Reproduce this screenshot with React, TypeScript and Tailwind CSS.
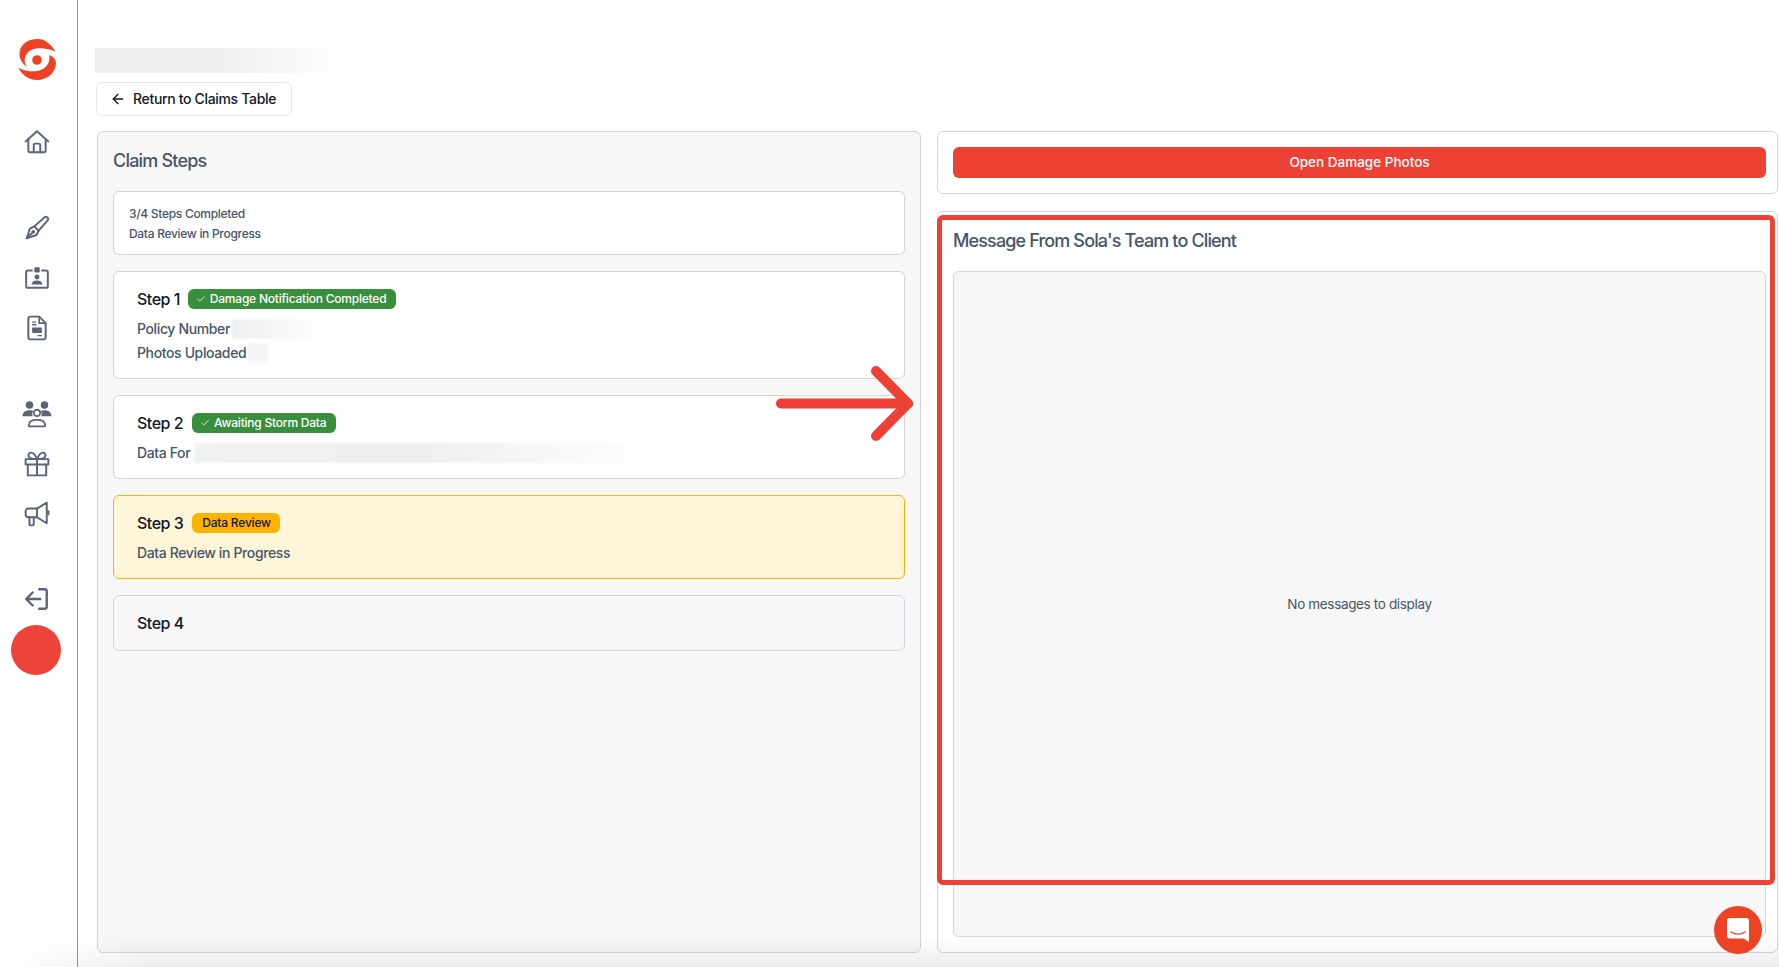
import { ArrowLeft, Check } from 'lucide-react';

function Logo() {
  return (
    <svg width="38" height="41" viewBox="0 0 38 41" fill="#ec4325">
      <circle cx="19" cy="21" r="4.800" />
      <path d="M37.700 12.700C31 3 26 0 20 0 9 0 1.500 6 1.500 15c0 5 3 10 7.200 12.700C6.500 24 6 20.500 7.500 17c2-4.500 5.500-7 10.500-7.500 7-.7 14 .5 19.700 3.200z" />
      <path d="M.3 28.700C4 36 11 41 19 41c11 0 19-8 19-17 0-3-2-6-6.700-8 .7 6-1.300 11-6.300 14-7 4-17 2.500-24.700-1.300z" />
    </svg>
  );
}

function HomeIcon() {
  return (
    <svg width="26" height="26" viewBox="0 0 24 24" fill="none" stroke="#5b6577" strokeWidth="1.8" strokeLinecap="round" strokeLinejoin="round">
      <path d="M1.500 11.500 12 2l10.500 9.500" />
      <path d="M4 9.500V19.500a2 2 0 0 0 2 2h12a2 2 0 0 0 2-2V9.500" />
      <path d="M9 21.500V14.500a1 1 0 0 1 1-1h4a1 1 0 0 1 1 1v7" />
    </svg>
  );
}

function BrushIcon() {
  return (
    <svg width="26" height="26" viewBox="0 0 24 24" fill="none" stroke="#5b6577" strokeWidth="1.8" strokeLinecap="round" strokeLinejoin="round">
      <path d="M9.500 10.500 18.800 2.300a2 2 0 0 1 2.800 2.900L13.500 14.500" />
      <path d="M9.500 10.500 5.500 12.500 2.500 21.500l9-3 2-4z" />
      <path d="m2.500 21.500 5-5" />
      <circle cx="8.500" cy="15.500" r="0.800" fill="#5b6577" />
    </svg>
  );
}

function BadgeIcon() {
  return (
    <svg width="26" height="26" viewBox="0 0 24 24" fill="none">
      <path d="M8 5H3.500a1.500 1.500 0 0 0-1.500 1.500v13A1.500 1.500 0 0 0 3.500 21h17a1.500 1.500 0 0 0 1.500-1.500v-13A1.500 1.500 0 0 0 20.500 5H16" stroke="#5b6577" strokeWidth="1.8" />
      <rect x="9.500" y="2" width="5" height="5" rx="1" fill="#5b6577" />
      <circle cx="12" cy="11" r="2.300" fill="#5b6577" />
      <path d="M7 18c0-2.500 2-3.800 5-3.800s5 1.300 5 3.800z" fill="#5b6577" />
    </svg>
  );
}

function FileIcon() {
  return (
    <svg width="26" height="26" viewBox="0 0 24 24" fill="none">
      <path d="M6 1.500h8l6 6v13a2 2 0 0 1-2 2H6a2 2 0 0 1-2-2v-17a2 2 0 0 1 2-2z" stroke="#5b6577" strokeWidth="1.800" strokeLinejoin="round" />
      <path d="M14 2v5.500h5.500" stroke="#5b6577" strokeWidth="1.500" />
      <rect x="7.500" y="11.500" width="9" height="5" rx="0.500" fill="#5b6577" />
      <path d="M7.500 6.500h3.500M7.500 9h4M12.500 19h4" stroke="#5b6577" strokeWidth="1.200" />
    </svg>
  );
}

function UsersIcon() {
  return (
    <svg width="30" height="28" viewBox="0 0 28 26" fill="none">
      <circle cx="7" cy="4.500" r="3.500" fill="#5b6577" />
      <circle cx="21" cy="4.500" r="3.500" fill="#5b6577" />
      <path d="M0.500 15c0-3.500 2.500-5.500 6.500-5.500 1.500 0 2.600.3 3.500.8-1 1.300-1.200 3-.5 4.700z" fill="#5b6577" />
      <path d="M27.500 15c0-3.500-2.500-5.500-6.500-5.500-1.500 0-2.600.3-3.500.8 1 1.300 1.200 3 .5 4.700z" fill="#5b6577" />
      <circle cx="14" cy="12" r="3" stroke="#5b6577" strokeWidth="1.700" />
      <path d="M6.500 24.500v-1.500c0-3 3-4.500 7.500-4.500s7.500 1.500 7.500 4.500v1.500z" stroke="#5b6577" strokeWidth="1.700" strokeLinejoin="round" />
    </svg>
  );
}

function GiftIcon() {
  return (
    <svg width="26" height="26" viewBox="0 0 24 24" fill="none" stroke="#5b6577" strokeWidth="1.800" strokeLinejoin="round">
      <rect x="1.500" y="7.500" width="21" height="5" />
      <path d="M3.500 12.500v10h17v-10M12 7.500v15" />
      <path d="M12 7.500C10 3 8.500 1.500 6.800 1.500 4.800 1.500 4 3 4.200 4.500 4.500 6.500 6.500 7.500 12 7.500zM12 7.500c2-4.500 3.500-6 5.200-6 2 0 2.800 1.500 2.600 3-.3 2-2.300 3-7.800 3z" />
    </svg>
  );
}

function MegaphoneIcon() {
  return (
    <svg width="26" height="26" viewBox="0 0 24 24" fill="none" stroke="#5b6577" strokeWidth="1.800" strokeLinecap="round" strokeLinejoin="round">
      <path d="M21 1.500 12 7H4a2.500 2.500 0 0 0-2.500 2.500v3A2.500 2.500 0 0 0 4 15h8l9 5.500z" />
      <path d="M12 7v8" />
      <path d="M22.500 9.500v3" />
      <path d="M5 15v6a1.500 1.500 0 0 0 1.500 1.500h1A1.500 1.500 0 0 0 9 21v-6" />
    </svg>
  );
}

function LogoutIcon() {
  return (
    <svg width="26" height="26" viewBox="0 0 24 24" fill="none" stroke="#5b6577" strokeWidth="2.200" strokeLinecap="round" strokeLinejoin="round">
      <path d="M14 3h5a2 2 0 0 1 2 2v14a2 2 0 0 1-2 2h-5" />
      <path d="M15 12H2M8 6l-6 6 6 6" />
    </svg>
  );
}

function Blur({ className }: { className: string }) {
  return <span className={`inline-block h-5 blur-[1px] ${className}`} />;
}

function Badge({ label }: { label: string }) {
  return (
    <span className="flex h-5 items-center gap-1 rounded-md bg-[#388e3c] pl-2 pr-[10px] text-xs font-medium tracking-[-0.22px] text-white">
      <Check size={10} strokeWidth={2} />
      {label}
    </span>
  );
}

export default function App() {
  return (
    <div className="relative flex h-[967px] overflow-hidden bg-white font-['Inter',sans-serif] text-sm text-[#475569]">
      <aside className="flex w-[78px] shrink-0 flex-col items-center border-r border-[#8e97a5] pr-[3px] pt-[39px]">
        <Logo />
        <div className="mt-[49px]"><HomeIcon /></div>
        <div className="mt-[60px]"><BrushIcon /></div>
        <div className="mt-6"><BadgeIcon /></div>
        <div className="mt-6"><FileIcon /></div>
        <div className="mt-[59px]"><UsersIcon /></div>
        <div className="mt-[23px]"><GiftIcon /></div>
        <div className="mt-6"><MegaphoneIcon /></div>
        <div className="mt-[59px]"><LogoutIcon /></div>
        <div className="mr-[2px] mt-[13px] h-[50px] w-[50px] rounded-full bg-[#ee4338]" />
      </aside>

      <main className="flex min-w-0 flex-1 flex-col pb-[14px] pl-[19px] pr-px pt-[48px]">
        <div className="-ml-[2px] h-[25px] w-[250px] bg-gradient-to-r from-[#efefef] via-[#efefef] to-white" />
        <button className="-ml-px mt-[9px] flex h-[34px] w-[196px] items-center gap-[7px] rounded-md border border-[#e5e7eb] bg-white pl-[13px] text-sm font-medium tracking-[-0.33px] text-[#111827]">
          <ArrowLeft size={16} strokeWidth={2} />
          Return to Claims Table
        </button>

        <div className="mt-[15px] flex min-h-0 flex-1 gap-4">
          <section className="flex w-[824px] shrink-0 flex-col gap-4 rounded-md border border-[#d1d5db] bg-[#f7f7f7] px-[15px] pt-[17px]">
            <h2 className="mb-[2px] text-lg font-medium leading-6 tracking-[-0.8px] text-[#475569]">Claim Steps</h2>
            <div className="flex h-[64px] flex-col justify-center gap-[5px] rounded-md border border-[#d1d5db] bg-white px-[15px] text-xs font-medium leading-[15px] tracking-[-0.3px]">
              <p>3/4 Steps Completed</p>
              <p>Data Review in Progress</p>
            </div>

            <div className="flex h-[108px] flex-col rounded-md border border-[#d1d5db] bg-white px-[23px] pt-[17px] tracking-[-0.37px]">
              <div className="flex h-5 items-center gap-2">
                <span className="text-base font-medium tracking-[-0.5px] text-[#111827]">Step 1</span>
                <Badge label="Damage Notification Completed" />
              </div>
              <p className="mt-[10px] flex h-5 items-center font-medium">
                Policy Number
                <Blur className="ml-[2px] w-[95px] bg-gradient-to-r from-[#eeeff0] to-white" />
              </p>
              <p className="mt-1 flex h-5 items-center font-medium">
                Photos Uploaded
                <Blur className="ml-[2px] w-5 bg-[#f5f5f5]" />
              </p>
            </div>

            <div className="flex h-[84px] flex-col rounded-md border border-[#d1d5db] bg-white px-[23px] pt-[17px] tracking-[-0.37px]">
              <div className="flex h-5 items-center gap-[9px]">
                <span className="text-base font-medium tracking-[-0.5px] text-[#111827]">Step 2</span>
                <Badge label="Awaiting Storm Data" />
              </div>
              <p className="mt-[10px] flex h-5 items-center font-medium">
                Data For
                <Blur className="ml-1 w-[460px] bg-gradient-to-r from-[#f0f1f2] via-[#eeeff0] to-white" />
              </p>
            </div>

            <div className="flex h-[84px] flex-col rounded-md border border-[#ffb300] bg-[#fff5d9] px-[23px] pt-[17px] tracking-[-0.37px]">
              <div className="flex h-5 items-center gap-[9px]">
                <span className="text-base font-medium tracking-[-0.5px] text-[#111827]">Step 3</span>
                <span className="flex h-5 items-center rounded-md bg-[#ffb300] pl-[10px] pr-[9px] text-xs font-medium tracking-[-0.2px] text-[#111827]">Data Review</span>
              </div>
              <p className="mt-[10px] flex h-5 items-center font-medium">Data Review in Progress</p>
            </div>

            <div className="flex h-[56px] items-center rounded-md border border-[#d1d5db] bg-[#f7f7f7] px-[23px]">
              <span className="text-base font-medium tracking-[-0.5px] text-[#111827]">Step 4</span>
            </div>
          </section>

          <section className="flex min-w-0 flex-1 flex-col gap-[17px]">
            <div className="flex h-[63px] items-center rounded-md border border-[#d1d5db] bg-white pl-[15px] pr-[11px]">
              <button className="h-[31px] w-full rounded-md bg-[#ec4134] pt-px text-[13.5px] font-medium text-white">Open Damage Photos</button>
            </div>
            <div className="flex min-h-0 flex-1 flex-col rounded-md border border-[#d1d5db] bg-white pb-[15px] pl-[15px] pr-[11px] pt-[17px]">
              <h2 className="h-[42px] text-lg font-medium leading-6 tracking-[-0.86px] text-[#475569]">Message From Sola's Team to Client</h2>
              <div className="flex flex-1 items-center justify-center rounded-md border border-[#d1d5db] bg-[#f7f7f7] pt-px text-[13.5px] tracking-[-0.35px]">No messages to display</div>
            </div>
          </section>
        </div>
      </main>

      {/* annotation drawn over the screenshot */}
      <div className="pointer-events-none absolute left-[937px] top-[215px] h-[670px] w-[838px] rounded-md border-[5px] border-[#ea4335]" />
      <svg className="pointer-events-none absolute left-[770px] top-[356px]" width="150" height="95" viewBox="0 0 150 95" fill="none" stroke="#ec4134" strokeWidth="10" strokeLinecap="round" strokeLinejoin="round">
        <path d="M11 47.500h127" />
        <path d="M106 15l32 32.500-32 32.500" />
      </svg>

      <div className="pointer-events-none absolute inset-x-0 bottom-0 h-[30px] bg-gradient-to-b from-transparent to-[#00000012] [mask-image:linear-gradient(to_right,transparent,black_150px)]" />

      <div className="absolute left-[1714px] top-[906px] flex h-12 w-12 items-center justify-center rounded-full bg-[#ec4325]">
        <svg width="24" height="26" viewBox="0 0 24 26" fill="white">
          <path d="M4 1h16a3 3 0 0 1 3 3v21l-5.500-3.500H4a3 3 0 0 1-3-3V4a3 3 0 0 1 3-3z" />
          <path d="M5 15c4 2.800 10 2.800 14 0" fill="none" stroke="#ec4325" strokeWidth="1.400" strokeLinecap="round" />
        </svg>
      </div>
    </div>
  );
}
